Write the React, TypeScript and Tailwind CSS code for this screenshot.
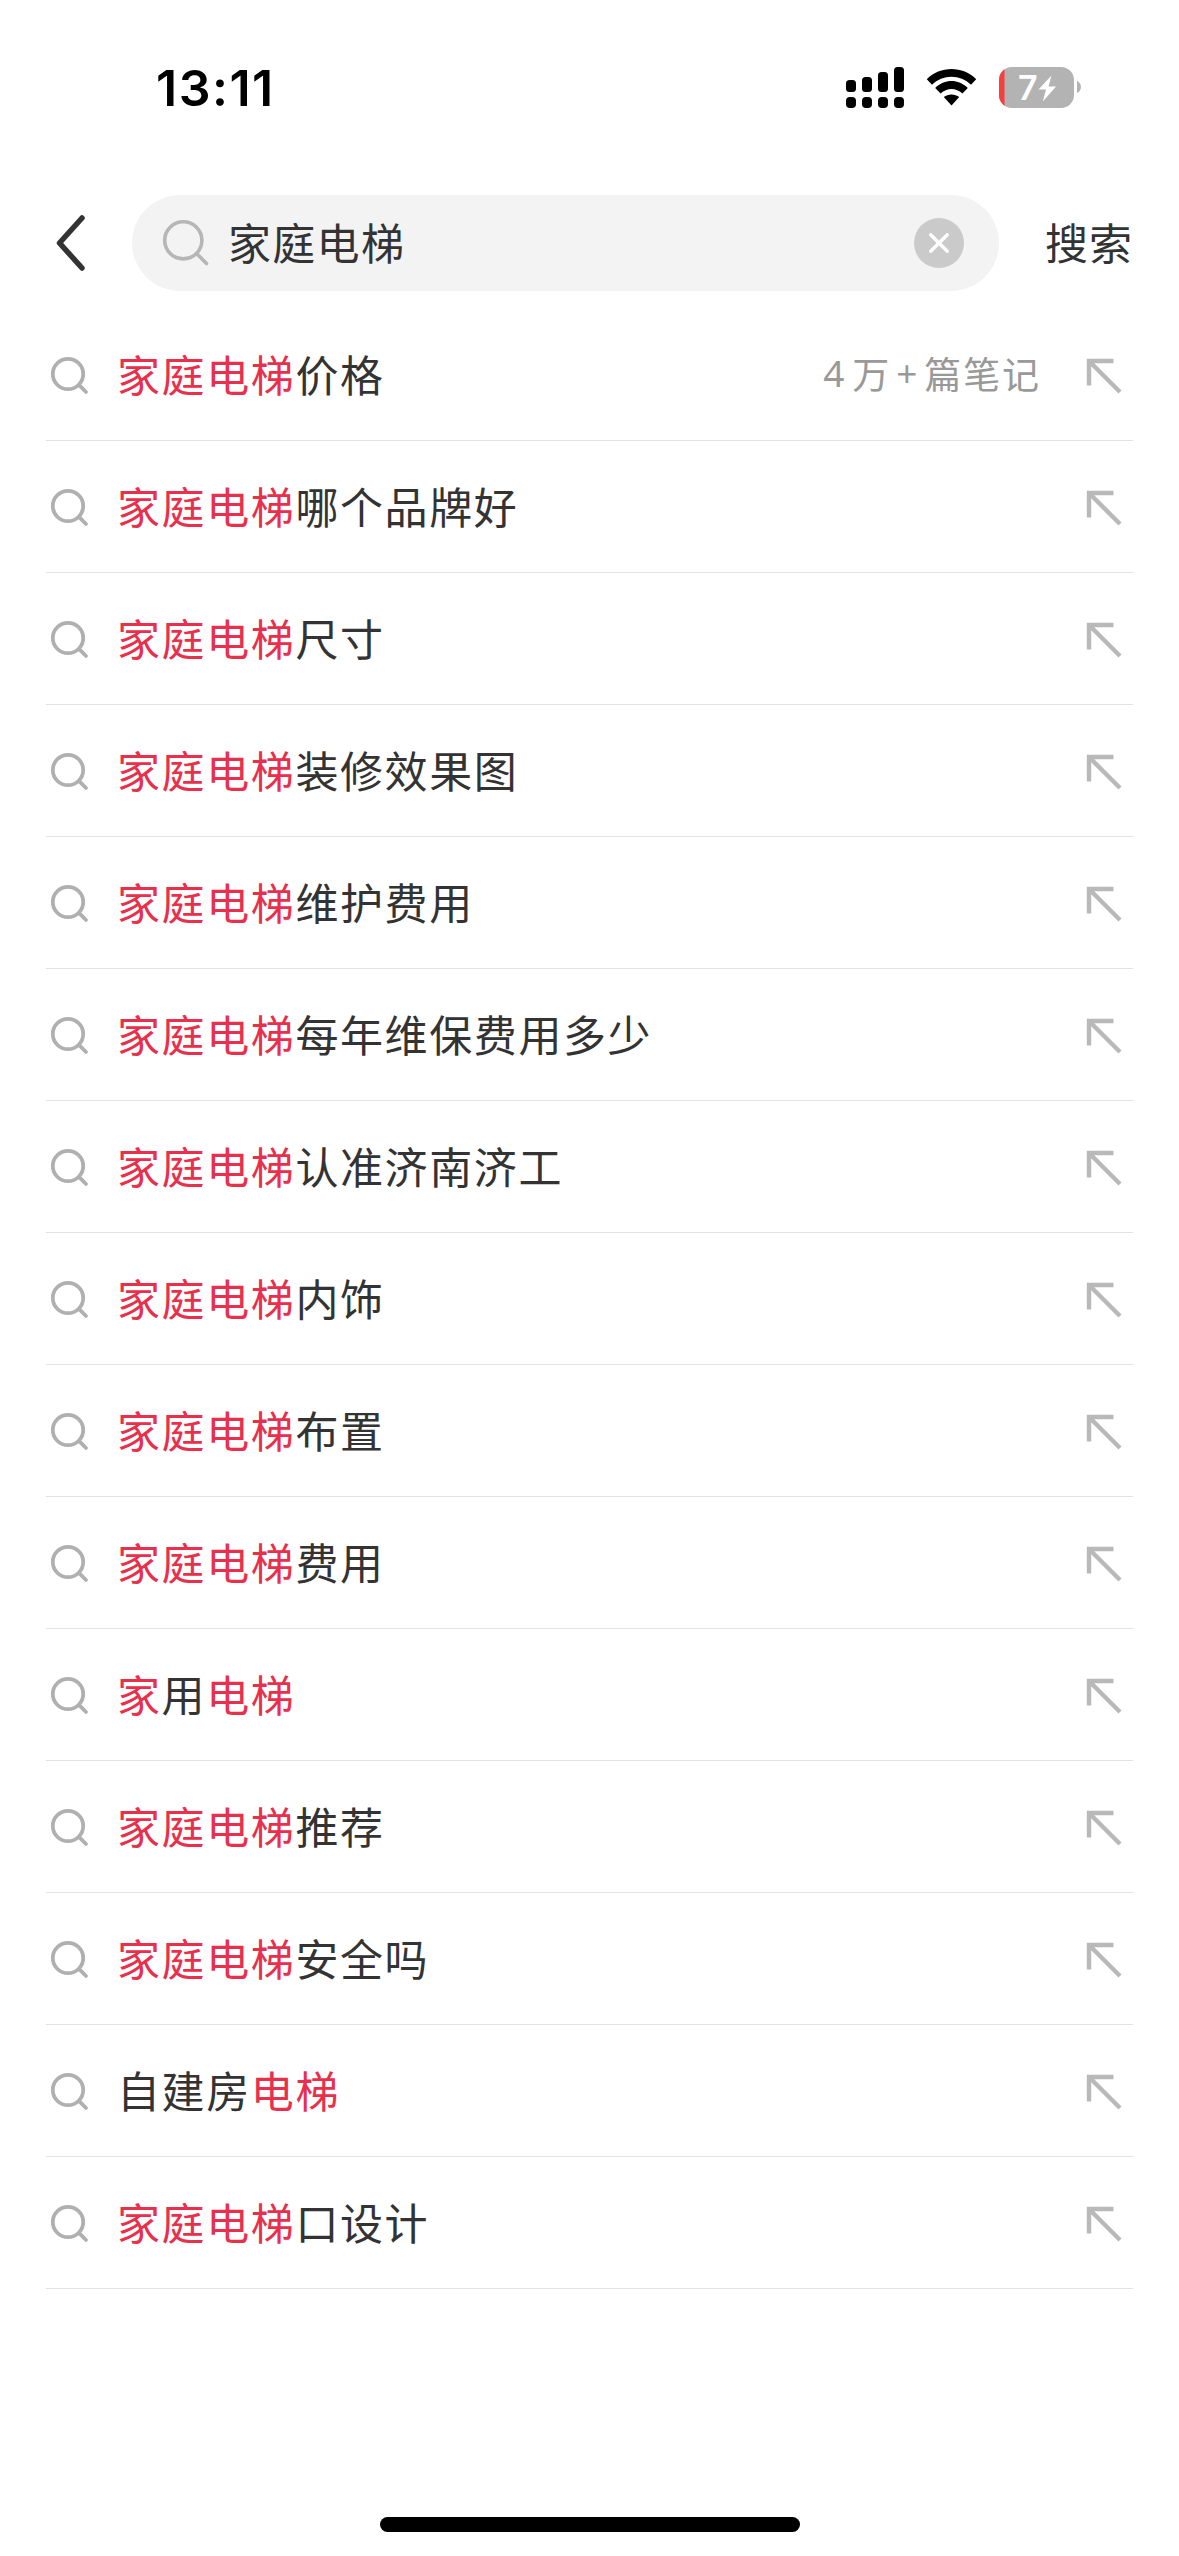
import { Fragment } from "react";

type Part = { text: string; hit?: boolean };
type Suggestion = { parts: Part[]; hasCount?: boolean };

const KEYWORD = "家庭电梯";

const withKeyword = (rest: string): Suggestion => ({
  parts: [{ text: KEYWORD, hit: true }, { text: rest }],
});

const suggestions: Suggestion[] = [
  { ...withKeyword("价格"), hasCount: true },
  withKeyword("哪个品牌好"),
  withKeyword("尺寸"),
  withKeyword("装修效果图"),
  withKeyword("维护费用"),
  withKeyword("每年维保费用多少"),
  withKeyword("认准济南济工"),
  withKeyword("内饰"),
  withKeyword("布置"),
  withKeyword("费用"),
  { parts: [{ text: "家", hit: true }, { text: "用" }, { text: "电梯", hit: true }] },
  withKeyword("推荐"),
  withKeyword("安全吗"),
  { parts: [{ text: "自建房" }, { text: "电梯", hit: true }] },
  withKeyword("口设计"),
];

// upper bars + dots for the second SIM
const bars = [
  { x: 0, y: 13 },
  { x: 16, y: 10 },
  { x: 32, y: 5 },
  { x: 48, y: 0 },
];

function StatusBar() {
  return (
    <header className="flex h-[175px] items-start justify-between pl-[156px] pr-[98px]">
      <span className="mt-[58px] font-['Inter',sans-serif] text-[50px] font-semibold leading-[60px] tracking-[1.5px] text-black">
        13:11
      </span>
      <div className="mt-[67px] flex items-start">
        <svg width="58" height="41" viewBox="0 0 58 41">
          {bars.map((b) => (
            <Fragment key={b.x}>
              <rect x={b.x} y={b.y} width="10" height={25 - b.y} rx="3.5" />
              <rect x={b.x} y="30" width="10" height="11" rx="4" />
            </Fragment>
          ))}
        </svg>
        <svg className="ml-[22px]" width="51" height="41" viewBox="0 0 51 41">
          <path d="M0.8 12.2 C14 -1.4 37 -1.4 50.2 12.2 L45 17.8 C34.5 7 16.5 7 6 17.8 Z" />
          <path d="M9.2 21 C18.5 11.8 32.5 11.8 41.8 21 L36.4 26.6 C30 20.6 21 20.6 14.6 26.6 Z" />
          <path d="M17.8 30 C22 26.6 29 26.6 33.2 30 L25.5 38.5 Z" />
        </svg>
        <svg className="ml-[22px]" width="82" height="41" viewBox="0 0 82 41">
          <defs>
            <clipPath id="battery">
              <rect width="75" height="41" rx="13" />
            </clipPath>
          </defs>
          <g clipPath="url(#battery)">
            <rect width="75" height="41" fill="#b3b3b3" />
            <rect width="5.5" height="41" fill="#f5413d" />
          </g>
          <path d="M78 14 C83.3 16 83.3 24 78 26 Z" fill="#b3b3b3" />
          <text x="19" y="33" fill="#fff" fontSize="34" fontWeight="600" fontFamily="Inter, sans-serif">
            7
          </text>
          <path d="M52.5 8.5 L39.5 22.5 H47 L43.8 34.5 L57 19.5 H49.5 Z" fill="#fff" />
        </svg>
      </div>
    </header>
  );
}

function SearchBar() {
  return (
    <div className="flex h-[134px] items-start">
      <svg className="ml-[54px] mt-[38px] shrink-0" width="32" height="60" viewBox="0 0 32 60">
        <path d="M28 5 L5.5 30 L28 55" fill="none" stroke="#333" strokeWidth="5.5" strokeLinecap="round" strokeLinejoin="round" />
      </svg>
      <div className="ml-[46px] mt-5 flex h-24 w-[867px] shrink-0 items-center rounded-full bg-[#f3f3f4] pl-[30px] pr-[35px]">
        <svg width="50" height="50" viewBox="0 0 50 50" fill="none" stroke="#b6b6b6" strokeWidth="3.6" strokeLinecap="round">
          <circle cx="21.3" cy="22.3" r="18.6" />
          <path d="M34.8 35.8 L44.5 45.5" />
        </svg>
        <span className="-mt-[4px] ml-4 flex-1 text-[43px] leading-[60px] tracking-[1.3px] text-[#333]">{KEYWORD}</span>
        <svg width="50" height="50" viewBox="0 0 50 50">
          <circle cx="25" cy="25" r="25" fill="#cacaca" />
          <path d="M16.7 16.7 L33.3 33.3 M33.3 16.7 L16.7 33.3" stroke="#fff" strokeWidth="3.4" strokeLinecap="round" />
        </svg>
      </div>
      <span className="ml-[46px] mt-[36px] whitespace-nowrap text-[43px] leading-[60px] tracking-[1px] text-[#333]">搜索</span>
    </div>
  );
}

function Row({ item }: { item: Suggestion }) {
  return (
    <li className="mx-[46px] flex h-[132px] items-center border-b border-[#e3e3e3]">
      <svg className="ml-1 mt-px shrink-0" width="40" height="40" viewBox="0 0 40 40" fill="none" stroke="#b0b0b0" strokeWidth="3.8" strokeLinecap="round">
        <circle cx="18" cy="19" r="15.2" />
        <path d="M29.2 30.2 L36 37" />
      </svg>
      <span className="-mt-[3px] ml-[27px] flex-1 whitespace-nowrap text-[43px] leading-[60px] tracking-[1.6px]">
        {item.parts.map((p, i) => (
          <span key={i} className={p.hit ? "text-[#e8304d]" : "text-[#333]"}>
            {p.text}
          </span>
        ))}
      </span>
      {item.hasCount && (
        <span className="-mt-[3px] mr-[45px] flex whitespace-nowrap text-[37px] leading-[60px] tracking-[1.9px] text-[#999]">
          <span className="font-['Noto_Sans',sans-serif]">4</span>
          <span className="ml-1.5">万</span>
          <span className="ml-[5px] font-['Noto_Sans',sans-serif]">+</span>
          <span className="ml-[5px]">篇笔记</span>
        </span>
      )}
      <svg className="mr-[11px] mt-[2px] shrink-0" width="36" height="36" viewBox="0 0 36 36" fill="none" stroke="#b9b9b9" strokeWidth="4.4">
        <path d="M27.5 3 H3 V27.5" />
        <path d="M3 3 L34 34" />
      </svg>
    </li>
  );
}

export default function App() {
  return (
    <div className="flex h-[2556px] w-[1179px] flex-col overflow-hidden bg-white font-['Noto_Sans_CJK_SC',sans-serif]">
      <StatusBar />
      <SearchBar />
      <ul className="flex-1">
        {suggestions.map((s, i) => (
          <Row key={i} item={s} />
        ))}
      </ul>
      <div className="mb-[24px] h-[15px] w-[420px] self-center rounded-full bg-black" />
    </div>
  );
}
